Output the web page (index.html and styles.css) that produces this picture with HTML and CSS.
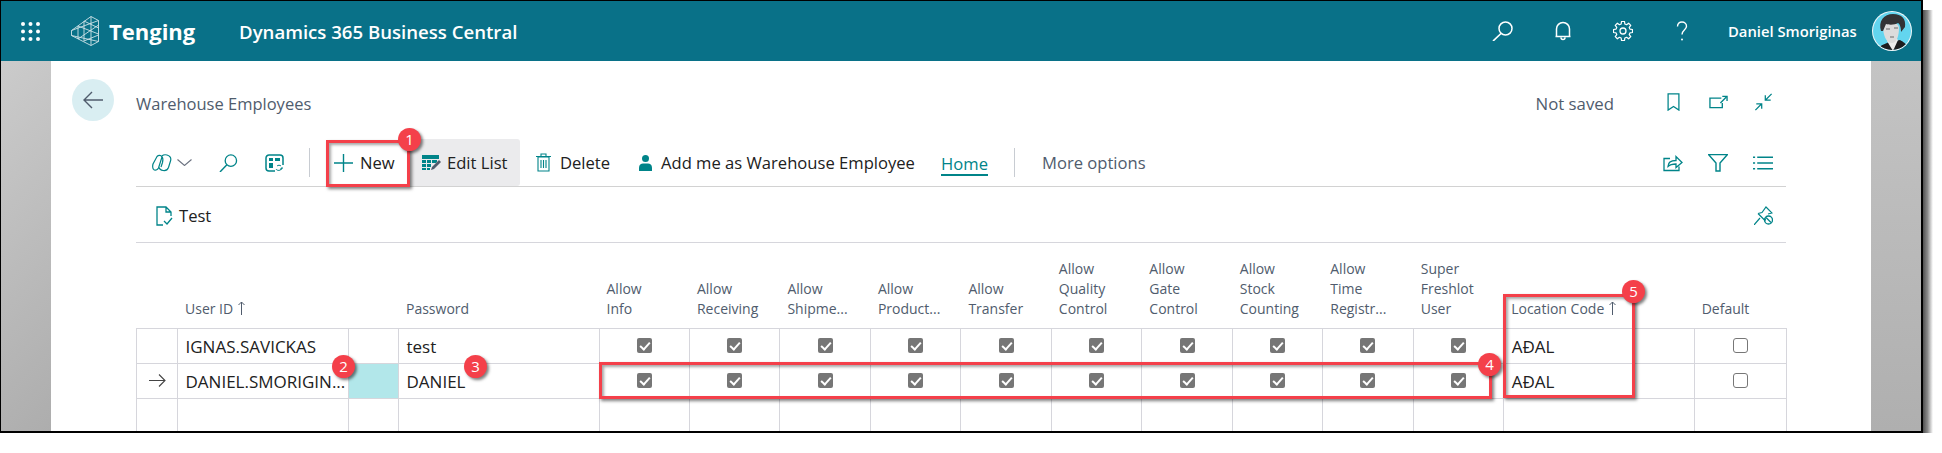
FILE: index.html
```html
<!DOCTYPE html>
<html lang="en">
<head>
  <meta charset="UTF-8">
  <title>Warehouse Employees</title>
  <link rel="stylesheet" href="styles.css">
</head>
<body>

  <div class="frame">
    <header class="topbar">
      <svg class="waffle" viewBox="0 0 19 19"><g fill="#fff"><circle cx="2" cy="2" r="2"/><circle cx="9.5" cy="2" r="2"/><circle cx="17" cy="2" r="2"/><circle cx="2" cy="9.5" r="2"/><circle cx="9.5" cy="9.5" r="2"/><circle cx="17" cy="9.5" r="2"/><circle cx="2" cy="17" r="2"/><circle cx="9.5" cy="17" r="2"/><circle cx="17" cy="17" r="2"/></g></svg>
      <svg class="logo" viewBox="0 0 28 30"><path d="M.5 14.5 20 .5l7.5 4v21L20 29.500.5 19.500zM20 .5v29M13 5v20M7 10v13M.5 14.500l27-10M.5 19.500l27 6M7 10l20.500 8M7 23l20.500-14M13 5l14.500 7M13 25l14.500-6" fill="none" stroke="#cfe3e8" stroke-width=".9"/></svg>
      <span class="brand">Tenging</span>
      <span class="product">Dynamics 365 Business Central</span>
      <div class="topbar-right">
        <svg class="top-icon top-search" viewBox="0 0 21 20"><circle cx="13.500" cy="7.500" r="6.500" fill="none" stroke="#fff" stroke-width="1.500"/><path d="M9 12.500 1 20" stroke="#fff" stroke-width="1.700"/></svg>
        <svg class="top-icon top-bell" viewBox="0 0 20 20"><path d="M3.500 15.500V8a6.500 6.500 0 0 1 13 0v7.500zM2.500 15.500h15M8 16.500a2 2 0 0 0 4 0" fill="none" stroke="#fff" stroke-width="1.500"/></svg>
        <svg class="top-icon top-gear" viewBox="0 0 20 20"><path d="M8.140 3.050 8.500.52h3l.36 2.530 1.740.71 2.040-1.530 2.130 2.130-1.530 2.040.71 1.740 2.530.36v3l-2.530.36-.71 1.740 1.530 2.040-2.130 2.130-2.040-1.530-1.740.71-.36 2.530h-3l-.36-2.530-1.740-.71-2.040 1.530-2.130-2.130 1.530-2.040-.71-1.740-2.530-.36v-3l2.530-.36.71-1.740-1.530-2.040 2.130-2.130 2.040 1.530z" fill="none" stroke="#fff" stroke-width="1.200" stroke-linejoin="round"/><circle cx="10" cy="10" r="3" fill="none" stroke="#fff" stroke-width="1.300"/></svg>
        <svg class="top-icon top-help" viewBox="0 0 20 20"><path d="M5.500 5.500C5.500 2.500 7.500 1 10 1s4.500 1.700 4.500 4.200c0 3.800-4.500 4-4.500 8.300" fill="none" stroke="#fff" stroke-width="1.400"/><circle cx="10" cy="18.500" r="1" fill="#fff"/></svg>
        <span class="user-name">Daniel Smoriginas</span>
        <svg class="avatar" viewBox="0 0 40 40">
          <clipPath id="avatarClip"><circle cx="20" cy="20" r="19"/></clipPath>
          <circle cx="20" cy="20" r="20" fill="#f2f8fa"/>
          <g clip-path="url(#avatarClip)">
            <rect width="40" height="40" fill="#63d5ef"/>
            <path d="M5 40c1-5 8-7 12-9l11-2c3 2 7 3 9 11z" fill="#1d1d1f"/>
            <path d="M15 30l6 10 5-11-3-3h-6z" fill="#ececec"/>
            <path d="M11 15c0 9 3 17 9 17 5 0 7-8 7-15s-16-8-16-2z" fill="#dcdcdc"/>
            <path d="M14 18h4M22 17h4M18 26h4" stroke="#6a6a6a" fill="none"/>
            <path d="M9 20C6 10 12 3 21 3s13 5 12 13l-4 5c0-4-1-8-3-9-3 2-9 2-12 1-1 2-2 5-3 7z" fill="#333335"/>
          </g>
        </svg>
      </div>
    </header>

    <div class="body-row">
      <div class="side side-left"></div>

      <main class="page">
        <div class="title-row">
          <div class="back-circle">
            <svg class="back-arrow" viewBox="0 0 20 18"><path d="M20 9H1M9 1 1 9l8 8" fill="none" stroke="#505c6d" stroke-width="1.400"/></svg>
          </div>
          <span class="page-title">Warehouse Employees</span>
          <span class="not-saved">Not saved</span>
          <div class="title-icons">
            <svg class="icon bookmark" viewBox="0 0 14 20"><path d="M1 1h12v18l-6-4-6 4z" fill="none" stroke="#008489" stroke-width="1.400"/></svg>
            <svg class="icon open-new" viewBox="0 0 20 14"><path d="M13 3H1v10h13V8M12 8l6-6M14 1h5v5" fill="none" stroke="#008489" stroke-width="1.400"/></svg>
            <svg class="icon collapse" viewBox="0 0 20 20"><path d="M19 1l-7 7M12 2.500V8h6M1 19l7-7M8 17.500V12H2" fill="none" stroke="#008489" stroke-width="1.400"/></svg>
          </div>
        </div>

        <div class="toolbar">
          <div class="tool tool-copilot">
            <svg class="icon" viewBox="0 0 20 18"><g fill="none" stroke="#008489" stroke-width="1.200"><path d="M5 2.500c1.500-1.500 4-1.500 5 .5l-3.500 11c-1 2-3.500 2.800-5 1.300C.5 14 .5 12 1 10z"/><path d="M10 2c1-1 3-1.500 5-1 3 .8 4.500 3 3.500 6l-2 6.500c-1 2.500-3 3.500-5.500 3-2 -.3-3.500-1.500-4-3"/><path d="M10 3c1.500 1.500 1 3.500.5 5.500L9 13"/></g></svg>
            <svg class="chevron" viewBox="0 0 15 7"><path d="M.5.500 7.500 6.500l7-6" fill="none" stroke="#6b7280" stroke-width="1.100"/></svg>
          </div>
          <svg class="icon tool-search" viewBox="0 0 20 19"><circle cx="12.500" cy="7" r="6" fill="none" stroke="#008489" stroke-width="1.400"/><path d="M8.300 11.300 1 19" stroke="#008489" stroke-width="1.500"/></svg>
          <svg class="icon tool-layout" viewBox="0 0 19 18"><path d="M10 17H4a3 3 0 0 1-3-3V4a3 3 0 0 1 3-3h11a3 3 0 0 1 3 3v7" fill="none" stroke="#008489" stroke-width="1.500"/><path d="M4 4h4v3H4zM10 4h5v3h-5zM4 9h4v5H4z" fill="#008489"/><path d="M11 15c1 2 5 2 6-1M17 13v2h-2M16 12c-1-1-3-1-4 0" fill="none" stroke="#008489"/></svg>
          <span class="tool-sep tool-sep-first"></span>
          <div class="tool tool-new">
            <svg class="icon" viewBox="0 0 19 18"><path d="M9.500 0v18M0 9h19" stroke="#008489" stroke-width="1.400"/></svg>
            <span>New</span>
          </div>
          <div class="tool tool-edit">
            <svg class="icon" viewBox="0 0 19 15"><path d="M0 0h17v4H0zM0 5h4v3H0zM5 5h4v3H5zM10 5h5v2l-1 1h-4zM0 9h4v3H0zM5 9h4v3H5zM0 13h4v2H0zM5 13h3v2H5z" fill="#008489"/><path d="M9 15l1-3 7-7 2 2-7 7z" fill="#505c6d"/></svg>
            <span>Edit List</span>
          </div>
          <div class="tool tool-delete">
            <svg class="icon" viewBox="0 0 15 19"><path d="M2 4h11v14H2zM0 3.500h15M5 3.500V1h5v2.500M5 7v8M7.500 7v8M10 7v8" fill="none" stroke="#008489" stroke-width="1.100"/></svg>
            <span>Delete</span>
          </div>
          <div class="tool tool-add">
            <svg class="icon" viewBox="0 0 13 16"><circle cx="6.500" cy="3.600" r="3.500" fill="#008489"/><path d="M0 16v-3.500C0 10 2 8.500 4 8.500h5c2 0 4 1.500 4 4V16z" fill="#008489"/></svg>
            <span>Add me as Warehouse Employee</span>
          </div>
          <span class="tool-home">Home</span>
          <span class="tool-sep tool-sep-second"></span>
          <span class="tool-more">More options</span>
          <div class="tool-right">
            <svg class="icon" viewBox="0 0 20 17"><path d="M7 4H1v12h15v-4M5 12c0-4 3-6 8-6V2l6 6-6 5V9.500c-4 0-6 .5-8 2.500z" fill="none" stroke="#008489" stroke-width="1.300"/></svg>
            <svg class="icon" viewBox="0 0 20 18"><path d="M.5.500h19L12 9v8H8V9z" fill="none" stroke="#008489" stroke-width="1.400"/></svg>
            <svg class="icon" viewBox="0 0 19 13"><path d="M0 1h2M4 1h15M0 6.500h2M4 6.500h15M0 12h2M4 12h15" stroke="#008489" stroke-width="1.400"/></svg>
          </div>
        </div>

        <div class="action-row">
          <div class="tool tool-test">
            <svg class="icon" viewBox="0 0 17 20"><path d="M7 19H1V1h9l5 5v4M10 1v5h5M8 15l3 3 5-6" fill="none" stroke="#008489" stroke-width="1.300"/></svg>
            <span>Test</span>
          </div>
          <svg class="icon pin" viewBox="0 0 19 19"><path d="M0 19l6-7M4 7.500l4-1L12 1l6 6-4 1M4 7.500l7 7 .5-2" fill="none" stroke="#008489" stroke-width="1.200"/><circle cx="14.500" cy="14" r="4" fill="none" stroke="#008489" stroke-width="1.300"/><path d="M12 11.500l5 5" stroke="#008489" stroke-width="1.200"/></svg>
        </div>

        <table class="lines">
          <colgroup>
            <col class="col-mark"><col class="col-user"><col class="col-gap"><col class="col-pass">
            <col class="col-flag"><col class="col-flag"><col class="col-flag"><col class="col-flag"><col class="col-flag">
            <col class="col-flag"><col class="col-flag"><col class="col-flag"><col class="col-flag"><col class="col-flag">
            <col class="col-loc"><col class="col-default">
          </colgroup>
          <thead>
            <tr>
              <th></th>
              <th>User ID <svg class="sort" viewBox="0 0 7 14"><path d="M3.500 14V1M.5 4l3-3 3 3" fill="none" stroke="#505c6d"/></svg></th>
              <th></th>
              <th>Password</th>
              <th>Allow<br>Info</th>
              <th>Allow<br>Receiving</th>
              <th>Allow<br>Shipme...</th>
              <th>Allow<br>Product...</th>
              <th>Allow<br>Transfer</th>
              <th>Allow<br>Quality<br>Control</th>
              <th>Allow<br>Gate<br>Control</th>
              <th>Allow<br>Stock<br>Counting</th>
              <th>Allow<br>Time<br>Registr...</th>
              <th>Super<br>Freshlot<br>User</th>
              <th>Location Code <svg class="sort" viewBox="0 0 7 14"><path d="M3.500 14V1M.5 4l3-3 3 3" fill="none" stroke="#505c6d"/></svg></th>
              <th>Default</th>
            </tr>
          </thead>
          <tbody>
            <tr>
              <td></td>
              <td>IGNAS.SAVICKAS</td>
              <td></td>
              <td>test</td>
              <td class="flag"><span class="check"></span></td>
              <td class="flag"><span class="check"></span></td>
              <td class="flag"><span class="check"></span></td>
              <td class="flag"><span class="check"></span></td>
              <td class="flag"><span class="check"></span></td>
              <td class="flag"><span class="check"></span></td>
              <td class="flag"><span class="check"></span></td>
              <td class="flag"><span class="check"></span></td>
              <td class="flag"><span class="check"></span></td>
              <td class="flag"><span class="check"></span></td>
              <td>AÐAL</td>
              <td class="flag"><span class="uncheck"></span></td>
            </tr>
            <tr>
              <td class="flag"><svg class="row-arrow" viewBox="0 0 17 13"><path d="M0 6.500h16M10 .5l6 6-6 6" fill="none" stroke="#444" stroke-width="1.100"/></svg></td>
              <td>DANIEL.SMORIGIN...</td>
              <td class="cell-active"></td>
              <td>DANIEL</td>
              <td class="flag"><span class="check"></span></td>
              <td class="flag"><span class="check"></span></td>
              <td class="flag"><span class="check"></span></td>
              <td class="flag"><span class="check"></span></td>
              <td class="flag"><span class="check"></span></td>
              <td class="flag"><span class="check"></span></td>
              <td class="flag"><span class="check"></span></td>
              <td class="flag"><span class="check"></span></td>
              <td class="flag"><span class="check"></span></td>
              <td class="flag"><span class="check"></span></td>
              <td>AÐAL</td>
              <td class="flag"><span class="uncheck"></span></td>
            </tr>
            <tr class="row-empty">
              <td></td><td></td><td></td><td></td><td></td><td></td><td></td><td></td>
              <td></td><td></td><td></td><td></td><td></td><td></td><td></td><td></td>
            </tr>
          </tbody>
        </table>
      </main>

      <div class="side side-right"></div>
    </div>

    <!-- red callouts drawn on top of the screenshot -->
    <div class="callout callout-new"></div>
    <div class="callout callout-flags"></div>
    <div class="callout callout-location"></div>
    <div class="badge badge-1">1</div>
    <div class="badge badge-2">2</div>
    <div class="badge badge-3">3</div>
    <div class="badge badge-4">4</div>
    <div class="badge badge-5">5</div>
  </div>

</body>
</html>
```

FILE: styles.css
```css
body {
  font-family: "Open Sans", "Liberation Sans", sans-serif;
  margin: 0;
  padding: 0;
  background-color: #ffffff;
  color: #212121;
}

.frame {
  position: relative;
  box-sizing: border-box;
  width: 1923px;
  height: 433px;
  border: 1px solid #000;
  border-right-width: 2px;
  border-bottom-width: 2px;
}

/* drop shadow of the screenshot, bottom and right edges */
.frame::before {
  content: "";
  position: absolute;
  left: 12px;
  right: -12px;
  bottom: -12px;
  height: 10px;
  background: linear-gradient(180deg, #505050, #8a8a8a 45%, #fff);
}

.frame::after {
  content: "";
  position: absolute;
  top: 9px;
  right: -12px;
  bottom: -2px;
  width: 10px;
  background: linear-gradient(90deg, #505050, #8a8a8a 45%, #fff);
}

svg {
  display: block;
  flex: none;
}

/* top bar */
.topbar {
  display: flex;
  align-items: center;
  height: 60px;
  background-color: #097188;
  color: #fff;
}

.waffle {
  width: 19px;
  height: 19px;
  margin-left: 20px;
}

.logo {
  width: 28px;
  height: 30px;
  margin-left: 31px;
}

.brand {
  font-size: 22px;
  font-weight: 700;
  margin-left: 10px;
  width: 130px;
}

.product {
  font-size: 18.6px;
  font-weight: 600;
}

.topbar-right {
  display: flex;
  align-items: center;
  margin-left: auto;
  padding-right: 9px;
}

.top-icon {
  width: 20px;
  height: 20px;
}

.top-search {
  width: 21px;
  margin-right: 40px;
}

.top-bell {
  margin-right: 40px;
}

.top-gear {
  margin-right: 39px;
}

.top-help {
  margin-right: 36px;
}

.user-name {
  font-size: 14.8px;
  font-weight: 600;
  width: 144px;
}

.avatar {
  width: 40px;
  height: 40px;
}

/* page area */
.body-row {
  display: flex;
  height: 370px;
}

.side {
  width: 50px;
  flex: none;
}

.side-left {
  background: linear-gradient(135deg, #cbcbcb, #adadad);
}

.side-right {
  background: linear-gradient(180deg, #c4c4c4, #afafaf);
}

.page {
  flex: 1;
  background-color: #fff;
  overflow: hidden;
}

.title-row {
  display: flex;
  align-items: center;
  padding: 18px 98px 0 21px;
}

.back-circle {
  width: 42px;
  height: 42px;
  border-radius: 50%;
  background-color: #d9eef2;
  display: flex;
  align-items: center;
  justify-content: center;
}

.back-arrow {
  width: 20px;
  height: 18px;
}

.page-title {
  margin-left: 22px;
  padding-top: 7px;
  font-size: 16.5px;
  color: #505c6d;
}

.not-saved {
  margin-left: auto;
  padding-top: 7px;
  font-size: 16.8px;
  color: #505c6d;
}

.title-icons {
  display: flex;
  align-items: center;
  margin-left: 50px;
  gap: 26px;
  padding-top: 4px;
}

.bookmark {
  width: 14px;
  height: 20px;
}

.open-new {
  width: 20px;
  height: 14px;
}

.collapse {
  width: 20px;
  height: 20px;
}

/* action bar */
.toolbar {
  display: flex;
  align-items: center;
  box-sizing: border-box;
  height: 48px;
  margin: 18px 85px 0;
  border-bottom: 1px solid #d2d2d2;
  font-size: 16.6px;
}

.icon {
  width: 19px;
  height: 18px;
}

.tool {
  display: flex;
  align-items: center;
  box-sizing: border-box;
  height: 47px;
}

.tool-copilot {
  width: 40px;
  margin-left: 16px;
}

.tool-copilot .icon {
  width: 20px;
}

.chevron {
  width: 15px;
  height: 7px;
  margin-left: 5px;
}

.tool-search {
  margin-left: 27px;
}

.tool-layout {
  margin-left: 27px;
}

.tool-sep {
  width: 1px;
  height: 29px;
  background-color: #c8ccd2;
  flex: none;
}

.tool-sep-first {
  margin-left: 25px;
}

.tool-new {
  width: 82px;
  margin-left: 15px;
  padding-left: 9px;
  gap: 7px;
}

.tool-edit {
  width: 113px;
  padding-left: 15px;
  gap: 6px;
  background-color: #ebebed;
  border-radius: 0 3px 3px 0;
}

.tool-edit .icon {
  height: 15px;
}

.tool-delete {
  width: 119px;
  padding-left: 16px;
  gap: 9px;
}

.tool-delete .icon {
  width: 15px;
  height: 19px;
}

.tool-add {
  width: 302px;
  gap: 9px;
}

.tool-add .icon {
  width: 13px;
  height: 16px;
}

.tool-home {
  box-sizing: border-box;
  height: 47px;
  width: 47px;
  padding-top: 13px;
  color: #008489;
  text-align: center;
  position: relative;
}

.tool-home::after {
  content: "";
  position: absolute;
  left: 0;
  right: 0;
  top: 35px;
  height: 2px;
  background-color: #008489;
}

.tool-sep-second {
  margin-left: 26px;
}

.tool-more {
  margin-left: 27px;
  color: #505c6d;
}

.tool-right {
  display: flex;
  align-items: center;
  margin-left: auto;
  padding-right: 13px;
  gap: 25px;
}

.tool-right .icon {
  width: 20px;
}

/* second bar */
.action-row {
  display: flex;
  align-items: center;
  justify-content: space-between;
  box-sizing: border-box;
  height: 56px;
  margin: 0 85px;
  padding: 2px 13px 0 20px;
  border-bottom: 1px solid #d6d6dc;
  font-size: 16.6px;
}

.tool-test {
  gap: 6px;
  height: auto;
}

.tool-test .icon {
  width: 17px;
  height: 20px;
}

.pin {
  width: 19px;
  height: 19px;
}

/* list */
.lines {
  border-collapse: collapse;
  table-layout: fixed;
  width: 1650px;
  margin-left: 85px;
}

.col-mark { width: 41px; }
.col-user { width: 170.5px; }
.col-gap { width: 50.5px; }
.col-pass { width: 200.5px; }
.col-flag { width: 90.48px; }
.col-loc { width: 190.5px; }
.col-default { width: 92.2px; }

.lines th {
  height: 85px;
  box-sizing: border-box;
  padding: 0 0 9px 7.5px;
  vertical-align: bottom;
  text-align: left;
  font-size: 14px;
  font-weight: 400;
  line-height: 20px;
  color: #505c6d;
  white-space: nowrap;
  border-bottom: 1px solid #d6d6dc;
}

.sort {
  display: inline-block;
  width: 7px;
  height: 14px;
  margin-left: 1px;
  vertical-align: -1px;
}

.lines td {
  height: 35px;
  box-sizing: border-box;
  padding: 2px 0 0 7.5px;
  font-size: 17px;
  border: 1px solid #d6d6dc;
  white-space: nowrap;
  overflow: hidden;
}

.lines td.flag {
  padding: 0;
}

.lines td.cell-active {
  background-color: #b2e7ea;
}

.row-arrow {
  width: 17px;
  height: 13px;
  margin: 0 auto;
}

.check,
.uncheck {
  display: block;
  box-sizing: border-box;
  width: 15px;
  height: 15px;
  margin: 0 auto;
  border-radius: 2px;
}

.check {
  position: relative;
  background-color: #767676;
}

.check::after {
  content: "";
  position: absolute;
  left: 5px;
  top: 2px;
  width: 4px;
  height: 8px;
  border: solid #fff;
  border-width: 0 2px 2px 0;
  transform: rotate(42deg);
}

.uncheck {
  border: 1.5px solid #777;
  border-radius: 3px;
  background-color: #fff;
}

/* callouts */
.callout {
  position: absolute;
  box-sizing: border-box;
  border: 3px solid #f4404a;
  box-shadow: 2px 2px 3px rgba(0, 0, 0, 0.5), inset 2px 2px 3px rgba(0, 0, 0, 0.35);
}

.callout-new {
  left: 325px;
  top: 139px;
  width: 84px;
  height: 47px;
}

.callout-flags {
  left: 598px;
  top: 361px;
  width: 893px;
  height: 37px;
}

.callout-location {
  left: 1502px;
  top: 293px;
  width: 132px;
  height: 104px;
}

.badge {
  position: absolute;
  width: 23px;
  height: 23px;
  border-radius: 50%;
  background-color: #f4404a;
  color: #fff;
  font-size: 15px;
  line-height: 23px;
  text-align: center;
  box-shadow: 2px 2px 3px rgba(0, 0, 0, 0.5);
}

.badge-1 { left: 397px; top: 127px; }
.badge-2 { left: 331px; top: 354px; }
.badge-3 { left: 463px; top: 354px; }
.badge-4 { left: 1477px; top: 352px; }
.badge-5 { left: 1621px; top: 279px; }
```
